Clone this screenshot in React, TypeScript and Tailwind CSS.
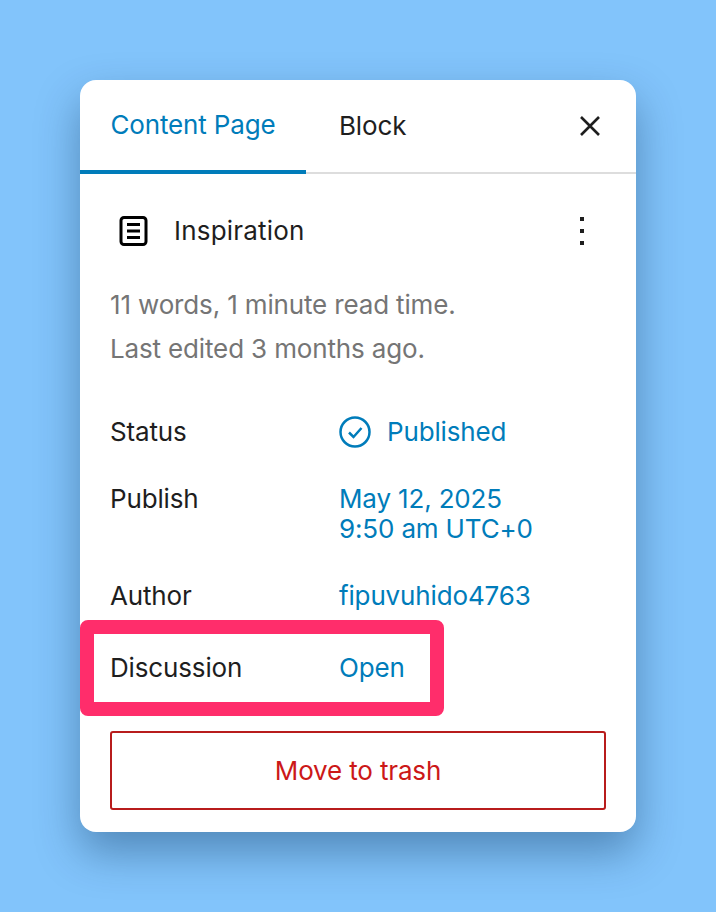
const FONT = 'font-["Inter","Liberation_Sans",sans-serif]';

function PageIcon() {
  return (
    <svg width="30" height="32" viewBox="0 0 30 32" fill="none" className="shrink-0">
      <rect x="2" y="2.5" width="25" height="27" rx="3" stroke="#000" strokeWidth="3" />
      <path d="M8 9.5h13M8 16h13M8 22.5h13" stroke="#000" strokeWidth="3" />
    </svg>
  );
}

function CheckCircle() {
  return (
    <svg width="32" height="32" viewBox="0 0 32 32" fill="none" className="shrink-0">
      <circle cx="16" cy="16" r="14.5" stroke="#007cba" strokeWidth="2.5" />
      <path d="M10 16.5l4.5 4.5L22.5 12" stroke="#007cba" strokeWidth="2.5" />
    </svg>
  );
}

function Row({ label, className, children }: { label: string; className?: string; children: React.ReactNode }) {
  return (
    <div className={`flex ${className ?? ''}`}>
      <div className="w-[229px] shrink-0 text-[#1e1e1e]">{label}</div>
      <div className="text-[#007cba]">{children}</div>
    </div>
  );
}

export default function App() {
  return (
    <div className={`${FONT} h-[912px] w-[716px] overflow-hidden bg-[#82c4fb] pt-20 pl-20 text-[26px] leading-[30px] tracking-[-0.15px]`}>
      <div className="relative h-[752px] w-[556px] rounded-2xl bg-white shadow-[0_20px_44px_rgba(0,40,80,0.38)]">
        {/* Tabs */}
        <div className="flex h-[94px] items-stretch border-b-2 border-[#ddd]">
          <div className="-mb-0.5 flex w-[226px] items-center justify-center border-b-4 border-[#007cba] text-[#007cba]">
            Content Page
          </div>
          <div className="flex items-center pl-[33px] text-[#1e1e1e]">Block</div>
          <svg width="22" height="22" viewBox="0 0 22 22" fill="none" className="mt-[35px] ml-auto mr-[35px]">
            <path d="M2 2l18 18M20 2L2 20" stroke="#1e1e1e" strokeWidth="2.6" />
          </svg>
        </div>

        {/* Title */}
        <div className="mt-[17px] flex h-[76px] items-center pt-[3px] pl-[39px] pr-[52px] text-[#1e1e1e]">
          <PageIcon />
          <span className="ml-[25px] tracking-[0.2px]">Inspiration</span>
          <div className="ml-auto flex flex-col gap-2">
            <span className="block h-1 w-1 bg-[#1e1e1e]" />
            <span className="block h-1 w-1 bg-[#1e1e1e]" />
            <span className="block h-1 w-1 bg-[#1e1e1e]" />
          </div>
        </div>

        {/* Summary */}
        <div className="mt-[16px] pl-[30px] leading-[44px] text-[#757575]">
          <p>11 words, 1 minute read time.</p>
          <p>Last edited 3 months ago.</p>
        </div>

        {/* Details */}
        <div className="mt-[43px] pl-[30px]">
          <Row label="Status" className="h-[36px] items-center">
            <span className="flex items-center gap-4">
              <CheckCircle />
              Published
            </span>
          </Row>
          <Row label="Publish" className="mt-[34px]">
            May 12, 2025
            <br />
            9:50 am UTC+0
          </Row>
          <Row label="Author" className="mt-[37px]">
            fipuvuhido4763
          </Row>
          <Row label="Discussion" className="mt-[42px]">
            Open
          </Row>
        </div>

        {/* Trash button */}
        <div className="mx-[30px] mt-[48px] flex h-[79px] items-center justify-center rounded-[3px] border-2 border-[#b81c1c] text-[#cc1818]">
          Move to trash
        </div>

        {/* Highlight round the discussion row */}
        <div className="absolute top-[540px] left-0 h-[96px] w-[364px] rounded-lg border-[14px] border-[#ff2d6b]" />
      </div>
    </div>
  );
}
